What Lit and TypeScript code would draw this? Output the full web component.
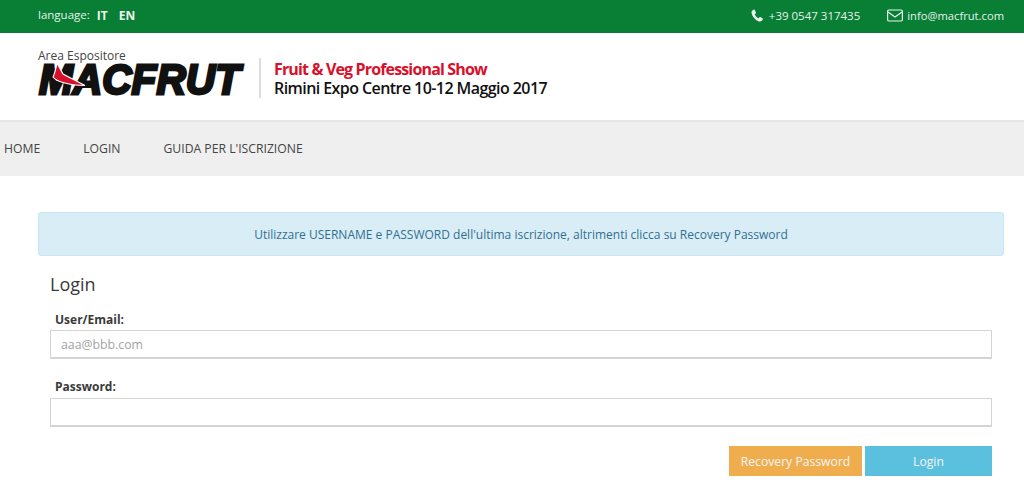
import { LitElement, html, css } from "lit";
import { customElement } from "lit/decorators.js";

@customElement("app-root")
export class AppRoot extends LitElement {
  static styles = css`
    :host { display: block; font-family: "Open Sans", sans-serif; color: #333; background: #fff; height: 490px; overflow: hidden; }
    .top { height: 33px; background: #087f35; color: #e6f2ea; display: flex; justify-content: space-between; align-items: center; padding: 0 20px 2px 38px; box-sizing: border-box; font-size: 11.5px; }
    .lang { display: flex; }
    .lang b { font-weight: 700; margin-left: 7px; color: #eef7f0; font-size: 12px; }
    .lang b + b { margin-left: 11px; }
    .contacts { display: flex; align-items: center; }
    .contact { display: flex; align-items: center; gap: 5px; }
    .contact + .contact { margin-left: 27px; gap: 4px; font-size: 11.2px; }
    .contact svg { display: block; }
    .head { height: 87px; box-sizing: border-box; padding: 16px 0 0 38px; display: flex; }
    .brand { width: 207px; height: 50px; display: flex; flex-direction: column; }
    .area { font-size: 12px; line-height: 14px; color: #444; flex: none; }
    .logo { display: block; flex: none; margin-top: -2px; overflow: visible; }
    .logo text { font-family: "Liberation Sans", sans-serif; font-weight: 700; font-style: italic; font-size: 42px; fill: #111; stroke: #111; stroke-width: 2.8px; }
    .show { margin: 9px 0 0 14px; padding: 2px 0 0 13px; height: 40px; box-sizing: border-box; border-left: 2px solid #ddd; font-size: 16px; font-weight: 600; letter-spacing: -0.57px; color: #111; display: flex; flex-direction: column; }
    .show span { display: block; height: 19px; line-height: 19px; }
    .show .red { color: #d9102b; font-weight: 700; letter-spacing: -0.85px; }
    nav { height: 56px; box-sizing: border-box; background: #efefef; border-top: 2px solid #e6e6e6; display: flex; align-items: center; padding: 0 0 1px 4px; gap: 43px; font-size: 12.2px; color: #444; }
    main { padding: 36px 20px 0 38px; }
    .alert { height: 44px; box-sizing: border-box; background: #d9edf7; border: 1px solid #c5e6f2; border-radius: 3px; color: #31708f; font-size: 12px; display: flex; align-items: center; justify-content: center; }
    form { padding: 0 12px; }
    h2 { margin: 13px 0 0; font-size: 18px; line-height: 30px; font-weight: 400; color: #3a3a3a; }
    label { display: block; margin: 13px 0 0 5px; font-size: 12px; line-height: 16px; font-weight: 700; color: #3a3a3a; }
    label.pw { margin-top: 20px; }
    .input { display: block; width: 100%; height: 29px; box-sizing: border-box; margin-top: 2px; border: 1px solid #d4d4d4; border-bottom-width: 2px; padding: 1px 10px 0; font: 12.3px "Open Sans", sans-serif; color: #333; background: #fff; outline: none; }
    .input::placeholder { color: #a3a3a3; opacity: 1; }
    label.pw + .input { margin-top: 3px; }
    .actions { display: flex; justify-content: flex-end; gap: 3px; margin-top: 19px; }
    button { height: 30px; border: 0; padding: 0; font: 12.2px "Open Sans", sans-serif; color: #f4f4f4; }
    .rec { width: 133px; background: #f0ad4e; }
    .log { width: 127px; background: #5bc0de; }
  `;

  render() {
    return html`
      <div class="top">
        <div class="lang"><span>language:</span><b>IT</b><b>EN</b></div>
        <div class="contacts">
          <div class="contact">
            <svg width="13" height="13" viewBox="0 0 13 13"><path fill="#eaf5ee" d="M3 .6 1.100 1.700C.3 2.300.3 4 1.200 6c1.200 2.600 3.300 4.900 5.600 6 1.500.7 2.900.8 3.900-.2l1.300-1.500c.2-.3.1-.6-.2-.8L9.400 8c-.3-.1-.5-.1-.7.1l-.9 1c-.2.2-.4.2-.7.1C5.900 8.600 4.600 7.200 3.900 5.800c-.1-.3-.1-.5.1-.7l.9-.8c.2-.2.2-.4.1-.7L3.600.8C3.400.5 3.200.5 3 .6z"/></svg>
            <span>+39 0547 317435</span>
          </div>
          <div class="contact">
            <svg width="16" height="13" viewBox="0 0 16 13" fill="none" stroke="#eaf5ee" stroke-width="1.200"><rect x=".6" y="1" width="14.800" height="11" rx="1.200"/><path d="M1 3l7 5 7-5"/></svg>
            <span>info@macfrut.com</span>
          </div>
        </div>
      </div>
      <div class="head">
        <div class="brand">
          <span class="area">Area Espositore</span>
          <svg class="logo" width="207" height="44" viewBox="0 0 207 44">
            <text x="1" y="33" textLength="201" lengthAdjust="spacingAndGlyphs">MACFRUT</text>
            <path fill="#d9102b" stroke="#fff" stroke-width="1.200" d="M19 2 25 13 47 24.500C39 24.500 31 23.500 25 21.500 21 20.500 17 18.500 15 16 17 12 18 7 19 2z"/>
          </svg>
        </div>
        <div class="show">
          <span class="red">Fruit &amp; Veg Professional Show</span>
          <span>Rimini Expo Centre 10-12 Maggio 2017</span>
        </div>
      </div>
      <nav><span>HOME</span><span>LOGIN</span><span>GUIDA PER L'ISCRIZIONE</span></nav>
      <main>
        <div class="alert">Utilizzare USERNAME e PASSWORD dell'ultima iscrizione, altrimenti clicca su Recovery Password</div>
        <form>
          <h2>Login</h2>
          <label>User/Email:</label>
          <input class="input" placeholder="aaa@bbb.com" />
          <label class="pw">Password:</label>
          <input class="input" type="password" />
          <div class="actions">
            <button class="rec" type="button">Recovery Password</button>
            <button class="log" type="button">Login</button>
          </div>
        </form>
      </main>
    `;
  }
}
